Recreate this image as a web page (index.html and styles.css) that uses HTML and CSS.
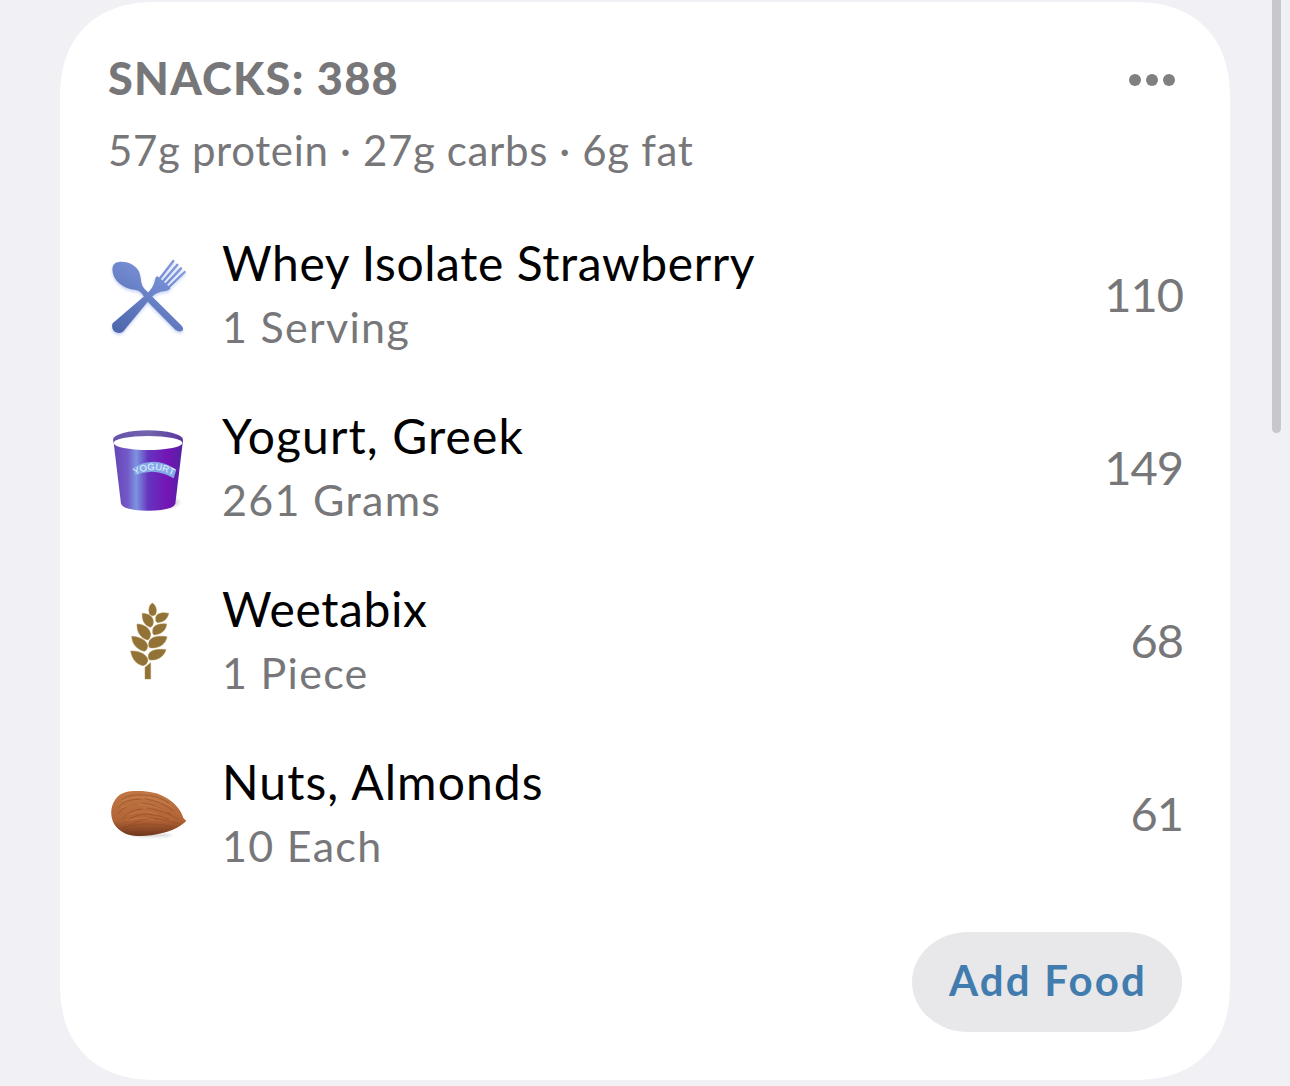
FILE: index.html
```html
<!DOCTYPE html>
<html lang="en">
<head>
    <meta charset="UTF-8">
    <title>Snacks</title>
    <link rel="stylesheet" href="styles.css">
</head>
<body>
    <div class="card">
        <div class="card-header">
            <h2>SNACKS: 388</h2>
            <div class="more">
                <span></span>
                <span></span>
                <span></span>
            </div>
        </div>
        <p class="macros">57g protein · 27g carbs · 6g fat</p>

        <ul class="foods">
            <li class="food">
                <svg class="food-icon" viewBox="39 33 240 240">
                    <defs>
                        <linearGradient id="cutlery" x1="200" y1="50" x2="80" y2="260" gradientUnits="userSpaceOnUse">
                            <stop offset="0" stop-color="#7f96dc" />
                            <stop offset="1" stop-color="#4e68ad" />
                        </linearGradient>
                    </defs>
                    <g class="cutlery" fill="url(#cutlery)">
                        <path class="tines" stroke="url(#cutlery)" d="M235 48 L194 101 M247 59 L203 110 M258 70 L212 119 M269 81 L219 129" />
                        <path d="M188 94 Q182 94 180 104 Q176 124 164 137 L151 151 L53 235 Q48 248 57 259 Q71 269 84 260 L170 156 L181 147 Q196 138 215 137 Q223 135 227 129 Z" />
                        <path d="M60 55 C79 44 117 53 131 78 C140 97 135 114 147 130 L176 159 L260 242 Q268 252 261 258 Q251 262 241 254 L155 167 L141 146 Q133 136 118 134 C92 132 65 114 56 92 C50 76 51 62 60 55 Z" />
                    </g>
                </svg>
                <div class="food-text">
                    <div class="food-name whey">Whey Isolate Strawberry</div>
                    <div class="food-amount">1 Serving</div>
                </div>
                <div class="calories">110</div>
            </li>
            <li class="food">
                <svg class="food-icon" viewBox="39 42 240 240">
                    <defs>
                        <linearGradient id="cup">
                            <stop offset="0" stop-color="#6446b4" />
                            <stop offset=".2" stop-color="#7358c8" />
                            <stop offset=".33" stop-color="#7d93e0" />
                            <stop offset=".5" stop-color="#6534be" />
                            <stop offset=".78" stop-color="#7414b4" />
                            <stop offset="1" stop-color="#5322a4" />
                        </linearGradient>
                        <linearGradient id="rim">
                            <stop offset="0" stop-color="#6650ad" />
                            <stop offset=".5" stop-color="#7265ad" />
                            <stop offset="1" stop-color="#5b359d" />
                        </linearGradient>
                        <path id="label-line" d="M120 180 Q177 148 238 184" />
                    </defs>
                    <ellipse class="cup-shadow" cx="190" cy="262" rx="64" ry="20" />
                    <path fill="url(#cup)" d="M55 75 L78 266 Q84 286 159 287 Q235 286 241 266 L264 75 Z" />
                    <ellipse fill="url(#rim)" cx="159" cy="74" rx="105" ry="28" />
                    <ellipse fill="#fff" cx="159" cy="84" rx="103" ry="21" />
                    <path fill="#84a9e7" d="M113 159 Q179 119 244 164 L236 190 Q179 156 120 181 Z" />
                    <text class="cup-label"><textPath href="#label-line">YOGURT</textPath></text>
                </svg>
                <div class="food-text">
                    <div class="food-name">Yogurt, Greek</div>
                    <div class="food-amount">261 Grams</div>
                </div>
                <div class="calories">149</div>
            </li>
            <li class="food">
                <svg class="food-icon" viewBox="39 36 240 240">
                    <g class="wheat">
                        <path d="M172 39 C183 45 187 61 182 73 Q173 82 164 73 C159 60 162 45 172 39 Z" />
                        <path d="M142 70 C162 70 176 82 175 96 Q175 109 166 112 C148 106 140 90 142 70 Z" />
                        <path d="M221 70 C197 65 181 72 182 86 Q180 94 187 98 C206 97 218 87 221 70 Z" />
                        <path d="M126 102 C150 102 167 118 167 134 Q166 147 157 150 C136 144 125 125 126 102 Z" />
                        <path d="M215 102 C188 99 172 108 173 123 Q171 131 177 135 C198 133 213 122 215 102 Z" />
                        <path d="M110 139 C137 140 157 153 158 169 Q157 181 148 184 C126 179 111 162 110 139 Z" />
                        <path d="M216 140 C183 135 162 143 161 160 Q159 170 166 174 C193 175 212 163 216 140 Z" />
                        <path d="M107 183 C135 181 157 195 159 211 Q156 225 145 227 C123 224 111 206 107 183 Z" />
                        <path d="M213 179 C182 175 161 183 160 197 Q158 207 166 210 C190 211 207 199 213 179 Z" />
                        <path d="M150 232 L167 218 L167 267 L150 267 Z" />
                    </g>
                </svg>
                <div class="food-text">
                    <div class="food-name weetabix">Weetabix</div>
                    <div class="food-amount">1 Piece</div>
                </div>
                <div class="calories">68</div>
            </li>
            <li class="food">
                <svg class="food-icon" viewBox="39 15 240 240">
                    <defs>
                        <linearGradient id="almond" x1="0" y1="0" x2="0" y2="1">
                            <stop offset="0" stop-color="#c07845" />
                            <stop offset=".65" stop-color="#b16435" />
                            <stop offset="1" stop-color="#6f351b" />
                        </linearGradient>
                    </defs>
                    <ellipse class="nut-shadow" cx="170" cy="196" rx="62" ry="6" />
                    <path fill="url(#almond)" d="M49 119 C54 89 73 67 105 64 C149 61 186 65 216 85 C238 98 258 120 265 144 L274 153 L266 160 C239 182 206 190 169 196 C125 202 91 197 69 176 C53 161 47 140 49 119 Z" />
                    <g class="nut-lines">
                        <path d="M80 88 Q105 71 145 75 Q190 75 221 99" />
                        <path d="M70 112 Q90 86 136 88 M150 86 Q196 94 237 123" />
                        <path d="M71 130 Q90 101 132 103 M142 99 Q186 104 226 132" />
                        <path d="M82 148 Q102 118 142 117 M158 115 Q206 120 250 148" />
                        <path d="M93 157 Q119 131 155 132 T221 148" />
                        <path d="M102 168 Q144 139 188 147 T248 160" />
                        <path d="M84 173 Q132 158 183 163 T232 172" />
                    </g>
                    <g class="nut-shine">
                        <path d="M84 92 Q128 74 174 86 T236 116" />
                        <path d="M81 112 Q119 99 159 106 T216 126" />
                        <path d="M98 135 Q142 115 188 133" />
                        <path d="M96 151 Q141 139 176 149" />
                    </g>
                </svg>
                <div class="food-text">
                    <div class="food-name">Nuts, Almonds</div>
                    <div class="food-amount">10 Each</div>
                </div>
                <div class="calories">61</div>
            </li>
        </ul>

        <button class="add-food">Add Food</button>
    </div>

    <div class="scrollbar"></div>
</body>
</html>
```

FILE: styles.css
```css
body {
    font-family: Lato, 'Open Sans', sans-serif;
    background-color: #f0f0f5;
    margin: 0;
    height: 1086px;
    overflow: hidden;
    color: #77777a;
}

.card {
    display: flex;
    flex-direction: column;
    box-sizing: border-box;
    width: 1170px;
    height: 1078px;
    margin: 2px 60px 0;
    padding: 48px 48px 0;
    background-color: #fff;
    border-radius: 96px;
    corner-shape: superellipse(1.2);
}

.card-header {
    display: flex;
    justify-content: space-between;
    align-items: center;
    height: 60px;
}

h2 {
    margin: 0;
    padding-bottom: 4px;
    font-size: 45px;
    font-weight: 900;
    line-height: 56px;
    letter-spacing: 1.3px;
}

.more {
    display: flex;
    gap: 5px;
    margin-right: 7px;
}

.more span {
    width: 12px;
    height: 12px;
    border-radius: 50%;
    background-color: #808080;
}

.macros {
    margin: 10px 0 0;
    font-size: 42px;
    line-height: 60px;
    letter-spacing: 0.65px;
}

.foods {
    list-style: none;
    margin: 28px 0 0;
    padding: 0;
}

.food {
    display: flex;
    align-items: center;
    height: 173px;
}

.food-icon {
    width: 80px;
    height: 80px;
    margin: 2px 34px 0 0;
    overflow: visible;
}

.food-text {
    flex: 1;
    line-height: 64px;
    white-space: nowrap;
}

.food-name {
    font-size: 48px;
    letter-spacing: 1.1px;
    color: #000;
}

.whey, .weetabix {
    letter-spacing: 0.58px;
}

.food-amount {
    font-size: 43px;
    letter-spacing: 1.3px;
}

.calories {
    margin-right: -1px;
    padding-bottom: 2px;
    font-size: 47px;
    letter-spacing: -1px;
}

.add-food {
    align-self: flex-end;
    width: 270px;
    height: 100px;
    margin-top: 32px;
    padding: 0 0 4px 2px;
    border: none;
    border-radius: 56px / 50px;
    background-color: #e8e8ea;
    color: #427cae;
    font-family: inherit;
    font-size: 42px;
    font-weight: bold;
    letter-spacing: 2.2px;
}

.scrollbar {
    position: absolute;
    top: -10px;
    left: 1272px;
    width: 9px;
    height: 443px;
    border-radius: 5px;
    background-color: #c7c7cc;
}

/* icons */
.cutlery {
    filter: drop-shadow(0 6px 4px #c9d5f4);
}

.tines {
    fill: none;
    stroke-width: 7;
    stroke-linecap: round;
}

.cup-shadow {
    fill: #ddd;
    filter: blur(5px);
}

.cup-label {
    fill: #e9f4ff;
    font-family: 'Liberation Sans', sans-serif;
    font-size: 28px;
}

.wheat {
    fill: #927236;
    stroke: #ad9150;
    stroke-width: 1.5;
}

.nut-shadow {
    fill: #ddd;
    filter: blur(3px);
}

.nut-lines, .nut-shine {
    fill: none;
    stroke: #8b4622;
    stroke-width: 2.5;
    stroke-linecap: round;
    opacity: .6;
}

.nut-shine {
    stroke: #d38b57;
    opacity: .55;
}
```
